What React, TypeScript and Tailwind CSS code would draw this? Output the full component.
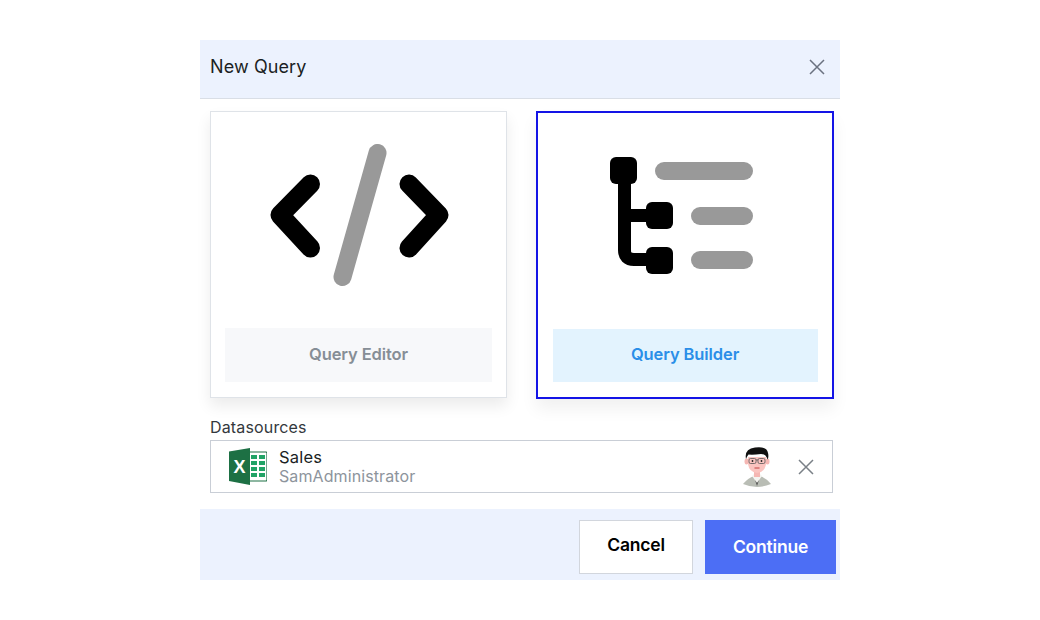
import React from "react";

const font = "font-['Inter','Liberation_Sans',sans-serif]";

function CodeIcon() {
  return (
    <svg width="200" height="160" viewBox="0 0 200 160" className="block">
      <g fill="none" strokeLinecap="round" strokeLinejoin="round">
        <path d="M51.5 40 L21 71 L51.5 104" stroke="#000" strokeWidth="19" />
        <path d="M150 40 L180 71 L150 104" stroke="#000" strokeWidth="19" />
        <path d="M118.5 9 L83.5 133" stroke="#999" strokeWidth="18" />
      </g>
    </svg>
  );
}

function TreeIcon() {
  return (
    <svg width="160" height="130" viewBox="0 0 160 130" className="block">
      <path d="M16.5 20 V96 Q16.5 105.5 26 105.5 H45 M16.5 61.5 H45" fill="none" stroke="#000" strokeWidth="13" />
      <rect x="2" y="3" width="27" height="27" rx="6" fill="#000" />
      <rect x="38" y="48" width="27" height="27" rx="6" fill="#000" />
      <rect x="38" y="93" width="27" height="27" rx="6" fill="#000" />
      <rect x="47" y="8" width="98" height="18" rx="9" fill="#999" />
      <rect x="83" y="53" width="62" height="18" rx="9" fill="#999" />
      <rect x="83" y="97" width="62" height="18" rx="9" fill="#999" />
    </svg>
  );
}

function ExcelIcon() {
  return (
    <svg width="38" height="37" viewBox="0 0 38 37" className="block">
      <path d="M20 4 H37 a1 1 0 0 1 1 1 V32 a1 1 0 0 1 -1 1 H20 Z" fill="#fff" stroke="#1d7044" strokeWidth="1.2" />
      <g fill="#21a366">
        <rect x="22" y="7" width="6" height="4" />
        <rect x="30" y="7" width="6" height="4" />
        <rect x="22" y="13" width="6" height="4" />
        <rect x="30" y="13" width="6" height="4" />
        <rect x="22" y="19" width="6" height="4" />
        <rect x="30" y="19" width="6" height="4" />
        <rect x="22" y="25" width="6" height="4" />
        <rect x="30" y="25" width="6" height="4" />
      </g>
      <path d="M21 0 L0 3.5 V33 L21 37 Z" fill="#1d7044" />
      <text x="10.5" y="25" textAnchor="middle" fontSize="18" fontWeight="700" fill="#fff" fontFamily="Liberation Sans, sans-serif">X</text>
    </svg>
  );
}

function Avatar() {
  return (
    <svg width="30" height="40" viewBox="0 0 30 40" className="block">
      <path d="M1 37 Q6 31 12 29 H18 Q24 31 29 37 Q15 43 1 37 Z" fill="#b9bdb5" />
      <path d="M10 29 L15 36 L20 29 L18 27 H12 Z" fill="#f4f4f0" />
      <path d="M13 33 L15 39 L17 33 L15 36 Z" fill="#555" />
      <rect x="12" y="22" width="6" height="8" fill="#f5b7b3" />
      <ellipse cx="4.5" cy="14.5" rx="2" ry="3" fill="#f5b7b3" />
      <ellipse cx="25.5" cy="14.5" rx="2" ry="3" fill="#f5b7b3" />
      <path d="M6 10 H24 V17 Q23 25 15 26 Q7 25 6 17 Z" fill="#fac4c0" />
      <path d="M4 12 Q2 2 13 0.5 Q25 -1 26 6 Q27 10 25.5 12.5 Q24 7 19 7 Q11 8 6.5 7.5 Q5 9 4 12 Z" fill="#111" />
      <g fill="none" stroke="#555" strokeWidth="0.8">
        <rect x="7" y="11.5" width="7" height="5" rx="1.5" />
        <rect x="16" y="11.5" width="7" height="5" rx="1.5" />
        <path d="M14 13 H16" />
      </g>
      <circle cx="10.5" cy="14" r="0.9" fill="#222" />
      <circle cx="19.5" cy="14" r="0.9" fill="#222" />
      <path d="M12.5 21 H17.5" stroke="#b33" strokeWidth="0.9" />
    </svg>
  );
}

function CloseIcon({ size, color }: { size: number; color: string }) {
  return (
    <svg width={size} height={size} viewBox="0 0 16 16" className="block">
      <path d="M1 1 L15 15 M15 1 L1 15" stroke={color} strokeWidth="1.5" fill="none" />
    </svg>
  );
}

export default function App() {
  return (
    <div className={`min-h-[620px] w-[1040px] bg-white pt-10 pl-[200px] ${font}`}>
      <div className="flex h-[540px] w-[640px] flex-col">
        <div className="flex h-[59px] shrink-0 items-center justify-between border-b border-[#d9dee6] bg-[#ecf2fe] pb-[5px] pl-2.5 pr-[15px]">
          <span className="text-[18px] leading-none tracking-[0.1px] text-[#1b1f24]">New Query</span>
          <CloseIcon size={16} color="#6b7280" />
        </div>

        <div className="mt-3 flex items-start pl-2.5">
          <div className="flex h-[287px] w-[297px] flex-col items-center border border-[#dfe3e8] bg-white px-[14px] pb-[15px] shadow-[0_8px_14px_rgba(0,0,0,0.08)]">
            <div className="mt-[32px]">
              <CodeIcon />
            </div>
            <div className="mt-auto flex h-[54px] w-full items-center justify-center bg-[#f7f8fa] pb-[1px] text-[16.5px] font-semibold tracking-[-0.1px] text-[#868e96]">
              Query Editor
            </div>
          </div>
          <div className="ml-[29px] flex h-[288px] w-[298px] flex-col items-center border-2 border-[#1414e6] bg-white px-[13px] pb-[15px] shadow-[0_10px_16px_rgba(0,0,0,0.06)]">
            <div className="mt-[41px] ml-[6px]">
              <TreeIcon />
            </div>
            <div className="mt-auto flex h-[53px] w-[265px] items-center justify-center bg-[#e3f3fe] pb-[2px] text-[16.5px] font-semibold tracking-[-0.1px] text-[#2a8ee8]">
              Query Builder
            </div>
          </div>
        </div>

        <div className="mt-[18px] pl-2.5 text-[16px] leading-[20px] tracking-[0.15px] text-[#33383d]">Datasources</div>
        <div className="mx-2.5 mt-[3px] flex h-[53px] w-[623px] items-center border border-[#c9ced6] bg-white pl-[18px] pr-[18px]">
          <ExcelIcon />
          <div className="ml-3 flex flex-col">
            <span className="pt-[1px] text-[16.5px] leading-[19px] tracking-[0.2px] text-[#1b1f24]">Sales</span>
            <span className="text-[16px] leading-[19px] tracking-[0.1px] text-[#8d949c]">SamAdministrator</span>
          </div>
          <div className="ml-auto flex items-center gap-[26px]">
            <Avatar />
            <CloseIcon size={16} color="#7a8087" />
          </div>
        </div>

        <div className="mt-auto flex h-[71px] items-start justify-end bg-[#ecf2fe] pt-[11px] pr-1">
          <button className="flex h-[54px] w-[114px] items-center justify-center border border-[#d2d6dd] bg-white pb-[3px] text-[17.5px] font-semibold tracking-[-0.2px] text-black">
            Cancel
          </button>
          <button className="ml-3 flex h-[54px] w-[131px] items-center justify-center bg-[#4c6ef5] text-[17.5px] font-semibold tracking-[-0.2px] text-white">
            Continue
          </button>
        </div>
      </div>
    </div>
  );
}
